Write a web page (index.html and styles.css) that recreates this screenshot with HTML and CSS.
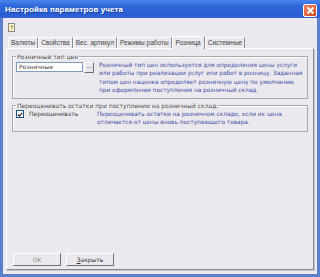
FILE: index.html
```html
<!DOCTYPE html>
<html lang="ru">
<head>
<meta charset="UTF-8">
<title>Настройка параметров учета</title>
<link rel="stylesheet" href="styles.css">
</head>
<body>

<div class="window">
    <!-- Title bar -->
    <div class="titlebar">
        <span class="title">Настройка параметров учета</span>
        <span class="close">
            <svg width="9" height="9" viewBox="0 0 9 9"><path d="M1.5 1.5 L7.5 7.5 M7.5 1.5 L1.5 7.5" stroke="#fff" stroke-width="2"/></svg>
        </span>
    </div>

    <div class="client">
        <div class="toolbar">
            <span class="help">?</span>
        </div>

        <!-- Tabs -->
        <ul class="tabs">
            <li>Валюты</li>
            <li>Свойства</li>
            <li>Вес. артикул</li>
            <li>Режимы работы</li>
            <li class="active">Розница</li>
            <li>Системные</li>
        </ul>

        <div class="panel">
            <fieldset class="group">
                <legend>Розничный тип цен</legend>
                <div class="row">
                    <div class="picker">
                        <span class="field">Розничные</span>
                        <span class="dots">...</span>
                    </div>
                    <p class="hint">Розничный тип цен используется для определения цены услуги или работы при реализации услуг или работ в розницу. Заданная типом цен наценка определяет розничную цену по умолчанию при оформлении поступления на розничный склад.</p>
                </div>
            </fieldset>

            <fieldset class="group">
                <legend>Переоценивать остатки при поступлении на розничный склад:</legend>
                <div class="row">
                    <label class="check">
                        <span class="box">
                            <svg width="7" height="7" viewBox="0 0 7 7"><path d="M1 3.5 L2.8 5.3 L6 1.5" fill="none" stroke="#222" stroke-width="1.4"/></svg>
                        </span>
                        Переоценивать
                    </label>
                    <p class="hint">Переоценивать остатки на розничном складе, если их цена отличается от цены вновь поступающего товара.</p>
                </div>
            </fieldset>

            <div class="buttons">
                <span class="btn disabled">OK</span>
                <span class="btn"><u>З</u>акрыть</span>
            </div>
        </div>
    </div>
</div>

</body>
</html>
```

FILE: styles.css
```css
body {
    margin: 0;
    padding: 0;
    font-family: 'DejaVu Sans', 'Liberation Sans', sans-serif;
    font-size: 6px;
    color: #333;
}

.window {
    width: 320px;
    height: 277px;
    display: flex;
    flex-direction: column;
    background: #5a7fcb;
}

.titlebar {
    height: 18px;
    display: flex;
    align-items: center;
    justify-content: space-between;
    padding: 0 3px 0 5px;
    background: linear-gradient(#4a86ee, #2f66da 35%, #2a5dd3 80%, #3265d6);
}

.title {
    color: #fff;
    font-family: 'Liberation Sans', sans-serif;
    font-weight: bold;
    font-size: 8px;
    letter-spacing: 0.1px;
    text-shadow: 1px 1px 0 #1a3f9a;
}

.close {
    width: 12px;
    height: 11px;
    border: 1px solid #fff;
    border-radius: 2px;
    background: linear-gradient(135deg, #ee8560, #d5461c);
    display: flex;
    align-items: center;
    justify-content: center;
    margin-top: 2px;
}

.client {
    flex: 1;
    margin: 0 3px 3px;
    background: #ebe9ee;
    display: flex;
    flex-direction: column;
}

.toolbar {
    height: 14px;
    padding: 5px 0 0 5px;
}

.help {
    display: inline-block;
    width: 5px;
    height: 7px;
    border: 1px solid #888;
    background: #fff8c0;
    font-size: 6px;
    line-height: 7px;
    text-align: center;
    color: #333;
}

/* Tabs */
.tabs {
    list-style: none;
    display: flex;
    margin: 0 0 0 5px;
    padding: 0;
    height: 11px;
    align-items: flex-end;
}

.tabs li {
    height: 10px;
    line-height: 10px;
    padding: 0 2px;
    border-left: 1px solid #fff;
    border-right: 1px solid #8a8a90;
    border-top: 1px solid #fff;
    font-family: 'Liberation Sans', sans-serif;
    font-size: 6.5px;
    color: #444;
}

.tabs li.active {
    height: 12px;
    line-height: 11px;
    padding: 0 3px;
    background: #ebe9ee;
    position: relative;
    top: 1px;
}

.panel {
    flex: 1;
    margin: 0 3px 4px;
    border-top: 1px solid #fff;
    border-left: 1px solid #fff;
    border-right: 1px solid #8a8a90;
    border-bottom: 1px solid #8a8a90;
    box-shadow: 1px 1px 0 #c8c6cc;
    padding: 4px 5px 3px 5px;
    display: flex;
    flex-direction: column;
    gap: 3px;
}

.group {
    margin: 0;
    border: 1px solid #a9a8ae;
    box-shadow: inset 1px 1px 0 #fff;
    padding: 1px 4px 4px 3px;
}

.group legend {
    padding: 0 1px;
    font-size: 6px;
    color: #444;
}

.row {
    display: flex;
    gap: 5px;
}

.picker {
    display: flex;
    height: 10px;
    margin-top: 1px;
    flex: none;
}

.field {
    width: 63px;
    height: 8px;
    line-height: 8px;
    padding-left: 2px;
    border: 1px solid #7f9db9;
    background: #fff;
    color: #444;
}

.dots {
    width: 8px;
    height: 9px;
    line-height: 6px;
    margin-left: 1px;
    text-align: center;
    border: 1px solid #fff;
    border-right-color: #707070;
    border-bottom-color: #707070;
    color: #333;
}

.hint {
    margin: 0;
    color: #4050a8;
    line-height: 8.3px;
    font-size: 5.8px;
}

.check {
    width: 76px;
    flex: none;
    display: flex;
    gap: 5px;
    color: #444;
    height: 8px;
    line-height: 8px;
}

.box {
    width: 6px;
    height: 6px;
    border: 1px solid #1c5180;
    background: #fff;
    display: flex;
    align-items: center;
    justify-content: center;
}

.buttons {
    margin-top: auto;
    display: flex;
    gap: 5px;
    padding-left: 1px;
}

.btn {
    width: 46px;
    height: 11px;
    line-height: 11px;
    text-align: center;
    border-top: 1px solid #fff;
    border-left: 1px solid #fff;
    border-right: 1px solid #707070;
    border-bottom: 1px solid #707070;
    color: #333;
}

.btn.disabled {
    color: #8a8a8a;
}
```
